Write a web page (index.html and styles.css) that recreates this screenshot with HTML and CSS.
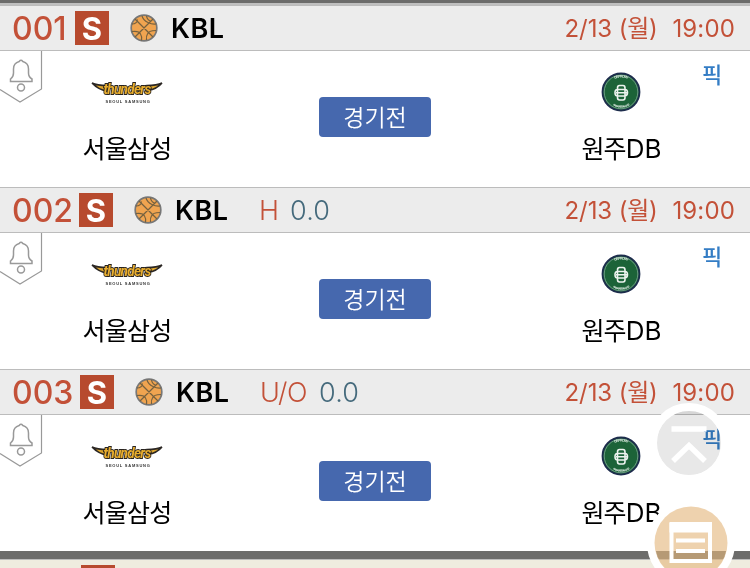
FILE: index.html
```html
<!DOCTYPE html>
<html lang="ko">
<head>
<meta charset="utf-8">
<title>KBL</title>
<link rel="stylesheet" href="styles.css">
</head>
<body>
<svg class="defs" width="0" height="0">
  <defs>
    <symbol id="ball" viewBox="0 0 28 28">
      <circle cx="14" cy="14" r="12.8" fill="#f0a450" stroke="#777" stroke-width="1.7"/>
      <path d="M5 5 23 23M23 5 5 23M12 1.800Q13 6 18 8.500Q22 10.500 26 10M16.500 1.800Q17 6 21 7.500M2 10Q7 10 7.500 5.500M1.800 17.500Q9 16.500 10.500 20Q12 22 11.500 26.500M26 16.500Q18.500 16.500 17.500 20Q16 22 16.500 26" fill="none" stroke="#75613f" stroke-width="1.2"/>
    </symbol>
    <symbol id="bell" viewBox="0 0 43 52">
      <path d="M41.500 0V38L20 51 0 38.500" fill="none" stroke="#999" stroke-width="1.200"/>
      <path d="M10.500 30.500v-2.500q3-2 3-6V18q0-6 5.700-7.500 1.800-2.300 3.600 0Q28.500 12 28.500 18v4q0 4 3.500 6v2.500Z" fill="none" stroke="#999" stroke-width="1.500"/>
      <circle cx="21" cy="36.500" r="3.500" fill="none" stroke="#999" stroke-width="1.500"/>
    </symbol>
    <symbol id="thunders" viewBox="0 0 72 26">
      <path d="M1 3Q6 5.500 16 5.500L18 8 16 11Q7 9.500 1 3ZM71 3Q66 5.500 56 5.500L54 8 57 10.500Q66 9 71 3Z" fill="#dca52e" stroke="#2b2724" stroke-width="1.500"/>
      <text x="12.500" y="14" textLength="47" lengthAdjust="spacingAndGlyphs" class="wordmark">thunders</text>
      <text x="14.500" y="23.200" textLength="43.500" class="wordmark-sub">SEOUL SAMSUNG</text>
    </symbol>
    <symbol id="db" viewBox="0 0 40 40">
      <circle cx="20" cy="20" r="18.500" fill="#1c6338" stroke="#1d2c4c" stroke-width="1.800"/>
      <circle cx="20" cy="20" r="16.800" fill="none" stroke="#7fa896" stroke-width=".8"/>
      <path id="arc-top" d="M7 13.500A14.500 14.500 0 0 1 33 13.500" fill="none"/>
      <path id="arc-low" d="M4.500 20A15.500 15.500 0 0 0 35.500 20" fill="none"/>
      <text class="crest"><textPath href="#arc-top" startOffset="50%" text-anchor="middle">DB PROMY</textPath></text>
      <text class="crest crest-low"><textPath href="#arc-low" startOffset="50%" text-anchor="middle">PRO BASKETBALL CLUB</textPath></text>
      <path d="M16.500 17.500H24Q26.500 17.500 26.500 20.500T24 24H16.500Q14 24 14 20.700T16.500 17.500ZM18.500 13.500H22Q24 13.500 24 16V25.500Q24 28 22 28H18.500Q16.500 28 16.500 25.500V16Q16.500 13.500 18.500 13.500ZM15 20.800H26" fill="none" stroke="#edf3ef" stroke-width="1.600"/>
    </symbol>
  </defs>
</svg>
<main class="list">
  <div class="divider top"></div>
  <section class="match">
    <header class="bar">
      <span class="num">001</span><span class="badge">S</span>
      <svg class="ball"><use href="#ball"/></svg><span class="league">KBL</span>
      <span class="date">2/13 <i>(월)</i></span><span class="time">19:00</span>
    </header>
    <div class="body">
      <svg class="bell"><use href="#bell"/></svg>
      <div class="team home"><svg class="thunders"><use href="#thunders"/></svg><span>서울삼성</span></div>
      <div class="state">경기전</div>
      <div class="team away"><svg class="db"><use href="#db"/></svg><span>원주<b>DB</b></span></div>
      <span class="pick">픽</span>
    </div>
  </section>
  <section class="match">
    <header class="bar">
      <span class="num n2">002</span><span class="badge">S</span>
      <svg class="ball"><use href="#ball"/></svg><span class="league">KBL</span>
      <span class="kind h">H</span><span class="line">0.0</span>
      <span class="date">2/13 <i>(월)</i></span><span class="time">19:00</span>
    </header>
    <div class="body">
      <svg class="bell"><use href="#bell"/></svg>
      <div class="team home"><svg class="thunders"><use href="#thunders"/></svg><span>서울삼성</span></div>
      <div class="state">경기전</div>
      <div class="team away"><svg class="db"><use href="#db"/></svg><span>원주<b>DB</b></span></div>
      <span class="pick">픽</span>
    </div>
  </section>
  <section class="match">
    <header class="bar">
      <span class="num n3">003</span><span class="badge">S</span>
      <svg class="ball"><use href="#ball"/></svg><span class="league">KBL</span>
      <span class="kind uo">U/O</span><span class="line">0.0</span>
      <span class="date">2/13 <i>(월)</i></span><span class="time">19:00</span>
    </header>
    <div class="body">
      <svg class="bell"><use href="#bell"/></svg>
      <div class="team home"><svg class="thunders"><use href="#thunders"/></svg><span>서울삼성</span></div>
      <div class="state">경기전</div>
      <div class="team away"><svg class="db"><use href="#db"/></svg><span>원주<b>DB</b></span></div>
      <span class="pick">픽</span>
    </div>
  </section>
  <div class="divider bottom"></div>
  <div class="next"><span class="badge"></span></div>
</main>
<svg class="fab up shade" viewBox="0 0 80 80">
  <circle cx="40" cy="40" r="32.500" fill="#e8e8e8"/>
</svg>
<svg class="fab up" viewBox="0 0 80 80">
  <circle cx="40" cy="40" r="36" fill="none" stroke="#fff" stroke-width="8"/>
  <path d="M22.500 26H57.500M24 58 40 42.500 56 58" fill="none" stroke="#fff" stroke-width="5.500"/>
</svg>
<svg class="fab memo" viewBox="0 0 88 88">
  <circle cx="44" cy="44" r="40" fill="none" stroke="#fff" stroke-width="8"/>
  <circle cx="44" cy="44" r="36.500" fill="#e3b77c" fill-opacity=".62"/>
  <path d="M24.500 24V62H63V24" fill="none" stroke="#fff" stroke-width="4"/>
  <path d="M22.500 23H65V33.500H22.500Z" fill="#fff"/>
  <path d="M29 41.500H58M29 52H58" stroke="#fff" stroke-width="3.800"/>
</svg>
</body>
</html>
```

FILE: styles.css
```css
* { box-sizing: border-box; }
body { margin: 0; width: 750px; height: 568px; overflow: hidden; position: relative; background: #fff; font-family: Inter, "Noto Sans CJK KR", sans-serif; }
.defs { position: absolute; }
.list { height: 568px; overflow: hidden; }
.divider { background: #6c6c6b; }
.top { height: 5px; border-bottom: 2px solid #bfbfbf; }
.bottom { height: 8px; }
.match { height: 182px; }
.bar { height: 46px; border-top: 1px solid #bcbcbc; border-bottom: 1px solid #bcbcbc; background: #ececec; display: flex; align-items: center; padding: 0 15px 0 12px; white-space: nowrap; line-height: 44px; }
.bar > span:not(.badge) { padding-top: 2px; }
.num { width: 63px; flex: none; font-size: 32px; font-weight: 500; color: #c35138; letter-spacing: 0; }
.n2 { width: 67px; }
.n3 { width: 68px; }
.badge { width: 34px; height: 34px; flex: none; background: #b74a2e; color: #fff; font-size: 31px; font-weight: 700; line-height: 35px; text-align: center; }
.ball { width: 28px; height: 28px; flex: none; margin-left: 21px; }
.league { margin-left: 13px; width: 53px; font-size: 27px; font-weight: 600; color: #000; letter-spacing: .5px; }
.kind { font-size: 27px; font-weight: 350; color: #c35138; }
.kind.h { margin-left: 31px; width: 31px; }
.kind.uo { margin-left: 31px; width: 59px; letter-spacing: -.4px; }
.line { font-size: 27px; font-weight: 350; color: #456a7c; letter-spacing: .2px; }
.date { margin-left: auto; font-size: 24px; color: #c35138; letter-spacing: -.1px; }
.date i { font-style: normal; letter-spacing: -.3px; }
.time { margin-left: 15px; font-size: 24px; color: #c35138; letter-spacing: .15px; }
.body { height: 136px; display: grid; grid-template-columns: 43px 168px 328px 162px 49px; background: #fff; }
.bell { width: 43px; height: 52px; }
.team { display: flex; flex-direction: column; align-items: center; font-size: 25px; color: #000; line-height: 36px; white-space: nowrap; font-family: "Noto Sans CJK KR", sans-serif; font-weight: 400; letter-spacing: -.8px; }
.team b { font: 400 26px Inter, sans-serif; letter-spacing: 0; }
.thunders { width: 72px; height: 26px; margin-top: 29px; }
.home span { margin-top: 23px; }
.db { width: 40px; height: 40px; margin: 21px 0 0 1px; }
.away span { margin: 17px 0 0 3px; }
.state { width: 112px; height: 40px; justify-self: center; margin-top: 46px; border-radius: 4px; background: #4668ae; color: #fff; font: 350 23px/38px "Noto Sans CJK KR", sans-serif; text-align: center; }
.pick { font: 500 22px/32px "Noto Sans CJK KR", sans-serif; color: #347dc5; margin: 6px 0 0 1px; }
.wordmark { font: italic 700 15px Roboto, sans-serif; fill: #e8ad2e; stroke: #28231e; stroke-width: 1.8px; paint-order: stroke; }
.wordmark-sub { font: 700 4px "Liberation Sans", sans-serif; fill: #333; }
.crest { font: 700 3.6px "Liberation Sans", sans-serif; fill: #d8e7dd; }
.crest-low { font-size: 2.6px; }
.next { height: 9px; border-top: 1px solid #bcbcbc; background: #efecdf; padding: 5px 0 0 81px; overflow: hidden; }
.next .badge { display: block; }
.fab { position: absolute; }
.up { left: 649px; top: 403px; width: 80px; height: 80px; }
.shade { mix-blend-mode: multiply; }
.memo { left: 647px; top: 499px; width: 88px; height: 88px; }
```
